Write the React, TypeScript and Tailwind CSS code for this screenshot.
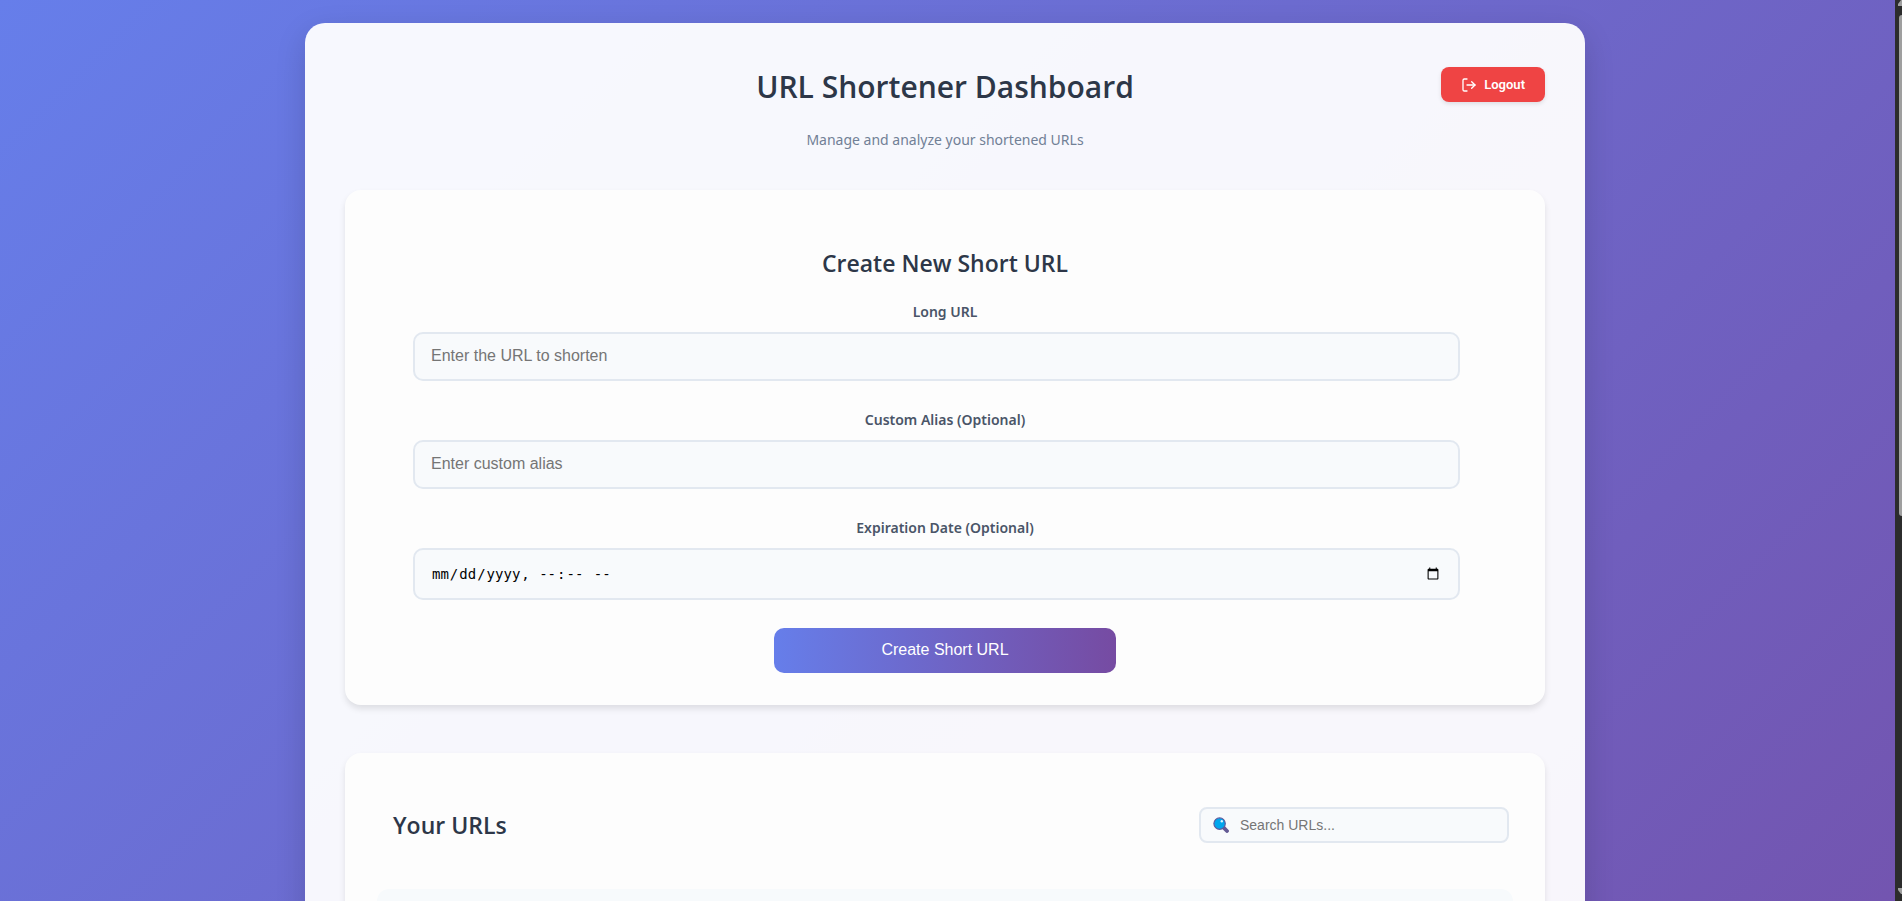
import React from "react";
import { FiLogOut } from "react-icons/fi";

const fieldClass =
  "w-full rounded-[10px] border-2 border-[#e2e8f0] bg-[#f8fafc] px-4 font-['Liberation_Sans',Arial,sans-serif] text-base text-black placeholder:text-[#757575] outline-none";

const labelClass = "text-center font-['Noto_Sans',sans-serif] text-sm leading-6 font-semibold text-[#4a5568]";

type FieldProps = {
  id: string;
  label: string;
  children: React.ReactNode;
};

function Field({ id, label, children }: FieldProps) {
  return (
    <div className="flex flex-col gap-2">
      <label htmlFor={id} className={labelClass}>
        {label}
      </label>
      <div className="pr-[17px]">{children}</div>
    </div>
  );
}

function SearchIcon() {
  return (
    <svg viewBox="0 0 16 16" className="size-4 shrink-0" aria-hidden="true">
      <path d="M10.4 10.4 14 14" stroke="#635994" strokeWidth="3.8" strokeLinecap="round" />
      <circle cx="6.6" cy="6.6" r="5.7" fill="#00a6ed" stroke="#5c5a9e" strokeWidth="1.2" />
      <circle cx="8.8" cy="4.3" r="1.2" fill="#d8f3ff" />
    </svg>
  );
}

function Scrollbar() {
  return (
    <div className="flex w-[7px] shrink-0 flex-col items-end justify-between overflow-hidden bg-[#2c2c2c]" aria-hidden="true">
      <svg viewBox="0 0 4 7" className="h-[7px] w-1">
        <path d="M0 6V4L3 0H4V6Z" fill="#9f9f9f" />
      </svg>
      <div className="flex w-[3px] flex-1 flex-col pt-2">
        <div className="h-[calc(57%+4px)] rounded-l bg-[#9f9f9f]" />
      </div>
      <svg viewBox="0 0 4 14" className="h-[14px] w-1">
        <path d="M0 1H4V7H3L0 3Z" fill="#9f9f9f" />
      </svg>
    </div>
  );
}

export default function App() {
  return (
    <div className="flex h-screen overflow-hidden font-['Open_Sans','Noto_Sans',sans-serif]">
      <div className="min-w-0 flex-1 overflow-hidden">
        <div className="bg-[linear-gradient(135deg,#667eea_0%,#764ba2_100%)] py-[23px] pr-[5px]">
          <main className="mx-auto max-w-[1280px] rounded-[20px] bg-white/95 p-10 shadow-[0_10px_30px_rgba(0,0,0,0.15)]">
            <header className="mb-[38px]">
              <div className="grid grid-cols-[1fr_auto_1fr] items-start">
                <h1 className="col-start-2 text-[30px] leading-[48px] font-semibold text-[#2d3748]">
                  URL Shortener Dashboard
                </h1>
                <button
                  type="button"
                  className="mt-1 flex h-[35px] items-center gap-[7px] justify-self-end rounded-lg bg-[#ef4444] px-5 font-['Roboto',sans-serif] text-[13px] font-semibold text-white shadow-[0_2px_4px_rgba(0,0,0,0.1)]"
                >
                  <FiLogOut className="size-4" />
                  Logout
                </button>
              </div>
              <p className="mt-[17px] text-center font-['Noto_Sans',sans-serif] text-sm leading-6 text-[#718096]">
                Manage and analyze your shortened URLs
              </p>
            </header>

            <section className="mb-12 rounded-2xl bg-[#fdfdfd] px-[68px] pt-[57px] pb-8 shadow-[0_4px_6px_rgba(0,0,0,0.1)]">
              <h2 className="mb-[21px] text-center text-[23px] leading-8 font-semibold text-[#2d3748]">
                Create New Short URL
              </h2>
              <form className="flex flex-col gap-[27px]" onSubmit={(e) => e.preventDefault()}>
                <Field id="long-url" label="Long URL">
                  <input id="long-url" type="text" placeholder="Enter the URL to shorten" className={`${fieldClass} h-[49px] pb-0.5`} />
                </Field>
                <Field id="alias" label="Custom Alias (Optional)">
                  <input id="alias" type="text" placeholder="Enter custom alias" className={`${fieldClass} h-[49px] pb-0.5`} />
                </Field>
                <Field id="expires" label="Expiration Date (Optional)">
                  <input
                    id="expires"
                    type="datetime-local"
                    className="h-[52px] w-full rounded-[10px] border-2 border-[#e2e8f0] bg-[#f8fafc] px-4 font-['DejaVu_Sans_Mono',monospace] text-sm text-black outline-none"
                  />
                </Field>
                <button
                  type="submit"
                  className="mt-px h-[45px] w-[342px] self-center rounded-[10px] bg-[linear-gradient(90deg,#667eea_0%,#764ba2_100%)] pb-0.5 font-['Liberation_Sans',Arial,sans-serif] text-base text-white"
                >
                  Create Short URL
                </button>
              </form>
            </section>

            <section className="rounded-2xl bg-[#fdfdfd] px-8 pt-[54px] pb-8 shadow-[0_4px_6px_rgba(0,0,0,0.1)]">
              <div className="mb-[46px] flex items-center justify-between pr-1 pl-4">
                <h2 className="text-[23px] leading-9 font-semibold text-[#2d3748]">Your URLs</h2>
                <label className="flex h-9 w-[310px] items-center gap-[11px] rounded-lg border-2 border-[#e2e8f0] bg-[#f8fafc] px-3">
                  <SearchIcon />
                  <input
                    type="search"
                    aria-label="Search URLs"
                    placeholder="Search URLs..."
                    className="min-w-0 flex-1 bg-transparent font-['Liberation_Sans',Arial,sans-serif] text-sm placeholder:text-[#757575] outline-none"
                  />
                </label>
              </div>
              <div className="h-[580px] rounded-xl bg-[#f7fafc]" />
            </section>
          </main>
        </div>
      </div>
      <Scrollbar />
    </div>
  );
}
